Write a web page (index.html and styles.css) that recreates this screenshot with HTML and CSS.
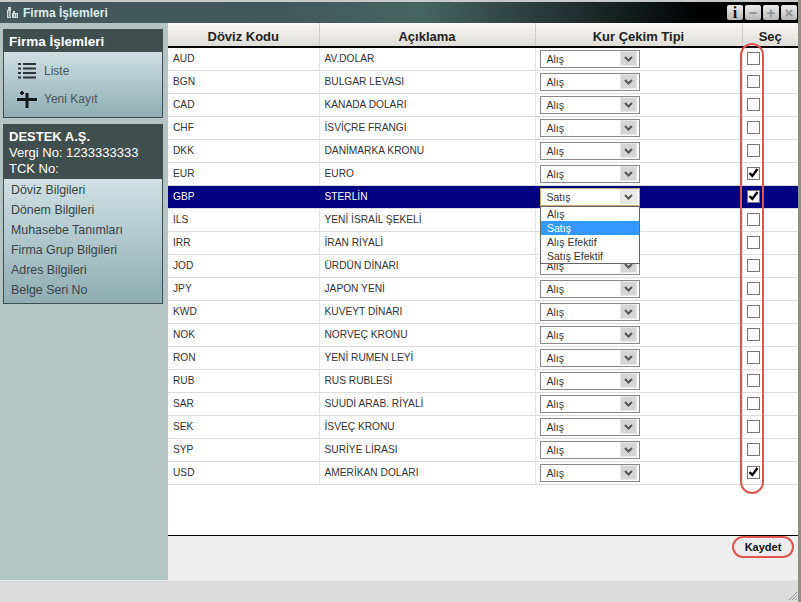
FILE: index.html
```html
<!DOCTYPE html>
<html lang="en">
<head>
  <meta charset="UTF-8">
  <meta name="viewport" content="width=device-width, initial-scale=1.0">
  <title>Firma İşlemleri</title>
  <link rel="stylesheet" href="styles.css">
</head>
<body>
  <div class="window">
    <div class="titlebar">
      <svg class="title-icon" width="12" height="12" viewBox="0 0 12 12"><path d="M0 11V3h1V0h3v11zM5 11V6h1V4h2v2h3v5z" fill="#cfdcdc"/><path d="M1.500 4v6M3 4v6M7.500 7v3M9.500 7v3" stroke="#5a6c6c" stroke-width=".7"/></svg>
      <span class="title-text">Firma İşlemleri</span>
      <div class="title-buttons">
        <span class="title-btn info">i</span>
        <span class="title-btn">&minus;</span>
        <span class="title-btn">+</span>
        <span class="title-btn">&times;</span>
      </div>
    </div>
    <div class="body">
      <div class="sidebar">
        <div class="panel">
          <div class="panel-head">Firma İşlemleri</div>
          <div class="panel-body actions">
            <div class="action">
              <svg width="20" height="18" viewBox="0 0 20 18"><path d="M1 2h3M6 2h13M1 6.500h3M6 6.500h13M1 11h3M6 11h13M1 15.500h3M6 15.500h13" stroke="#2c3636" stroke-width="2" fill="none"/></svg>
              <span>Liste</span>
            </div>
            <div class="action">
              <svg width="20" height="18" viewBox="0 0 20 18"><path d="M0 9.500h20M10 3v15" stroke="#151a1a" stroke-width="3" fill="none"/><path d="M3 3h4M5 1v4" stroke="#151a1a" stroke-width="2" fill="none"/></svg>
              <span>Yeni Kayıt</span>
            </div>
          </div>
        </div>
        <div class="panel">
          <div class="panel-head company">
            <b>DESTEK A.Ş.</b><br>Vergi No: 1233333333<br>TCK No:
          </div>
          <div class="panel-body links">
            <div>Döviz Bilgileri</div>
            <div>Dönem Bilgileri</div>
            <div>Muhasebe Tanımları</div>
            <div>Firma Grup Bilgileri</div>
            <div>Adres Bilgileri</div>
            <div>Belge Seri No</div>
          </div>
        </div>
      </div>
      <div class="main">
        <div class="table-area">
          <table class="grid">
            <colgroup><col class="c1"><col class="c2"><col class="c3"><col class="c4"></colgroup>
            <thead>
              <tr><th>Döviz Kodu</th><th>Açıklama</th><th>Kur Çekim Tipi</th><th>Seç</th></tr>
            </thead>
            <tbody id="rows"></tbody>
          </table>
          <div class="dropdown">
            <div>Alış</div>
            <div class="active">Satış</div>
            <div>Alış Efektif</div>
            <div>Satış Efektif</div>
          </div>
          <div class="ring ring-sec"></div>
        </div>
        <div class="footer">
          <button class="save">Kaydet</button>
        </div>
      </div>
    </div>
    <div class="statusbar">
      <svg class="grip" width="10" height="10" viewBox="0 0 10 10"><path d="M9 1L1 9M9 4L4 9M9 7L7 9" stroke="#8f9a9a" stroke-width="1" fill="none"/></svg>
    </div>
  </div>

  <script>
    // ILS and IRR combos sit behind the open dropdown, so they have no label
    const data = [
      ["AUD", "AV.DOLAR", "Alış", false],
      ["BGN", "BULGAR LEVASI", "Alış", false],
      ["CAD", "KANADA DOLARI", "Alış", false],
      ["CHF", "İSVİÇRE FRANGI", "Alış", false],
      ["DKK", "DANİMARKA KRONU", "Alış", false],
      ["EUR", "EURO", "Alış", true],
      ["GBP", "STERLİN", "Satış", true],
      ["ILS", "YENİ İSRAİL ŞEKELİ", "", false],
      ["IRR", "İRAN RİYALİ", "", false],
      ["JOD", "ÜRDÜN DİNARI", "Alış", false],
      ["JPY", "JAPON YENİ", "Alış", false],
      ["KWD", "KUVEYT DİNARI", "Alış", false],
      ["NOK", "NORVEÇ KRONU", "Alış", false],
      ["RON", "YENİ RUMEN LEYİ", "Alış", false],
      ["RUB", "RUS RUBLESİ", "Alış", false],
      ["SAR", "SUUDİ ARAB. RİYALİ", "Alış", false],
      ["SEK", "İSVEÇ KRONU", "Alış", false],
      ["SYP", "SURİYE LİRASI", "Alış", false],
      ["USD", "AMERİKAN DOLARI", "Alış", true]
    ];
    const arrow = '<svg width="9" height="6" viewBox="0 0 9 6"><path d="M1 1l3.500 3.500L8 1" stroke="#555" stroke-width="2" fill="none"/></svg>';
    const tick = '<svg width="11" height="10" viewBox="0 0 11 10"><path d="M1.500 5l2.800 3L9.500 1" stroke="#000" stroke-width="2.400" fill="none"/></svg>';
    const tbody = document.getElementById("rows");
    for (const d of data) {
      const row = document.createElement("tr");
      if (d[0] === "GBP") row.className = "selected";
      row.innerHTML = `
        <td class="label">${d[0]}</td>
        <td class="label">${d[1]}</td>
        <td><div class="combo"><span>${d[2]}</span><i>${arrow}</i></div></td>
        <td><div class="check">${d[3] ? tick : ""}</div></td>
      `;
      tbody.appendChild(row);
    }
  </script>
</body>
</html>
```
FILE: styles.css
```css
html, body {
  margin: 0;
  padding: 0;
}
body {
  font-family: "Liberation Sans", Arial, sans-serif;
  width: 801px;
  height: 602px;
  overflow: hidden;
  background: #c6cbca;
}
.window {
  display: flex;
  flex-direction: column;
  height: 602px;
  box-sizing: border-box;
  padding-top: 2px;
  border-right: 3px solid #8f8f88;
}
.titlebar {
  display: flex;
  align-items: center;
  height: 21px;
  flex: none;
  padding: 0 1px 0 7px;
  color: #dcecec;
  font-size: 12px;
  font-weight: bold;
  background: linear-gradient(to right, #44585a 0%, #42595a 35%, #466460 53%, #1c2a2a 74%, #000 88%);
}
.title-icon {
  margin-right: 4px;
}
.title-buttons {
  display: flex;
  gap: 2px;
  margin-left: auto;
}
.title-btn {
  display: block;
  width: 16px;
  height: 15px;
  border-radius: 2px;
  background: linear-gradient(#ededed, #b8b8b8);
  color: #8b9090;
  font-size: 15px;
  line-height: 15px;
  text-align: center;
}
.title-btn.info {
  color: #111;
  font-family: "Liberation Serif", serif;
  font-size: 16px;
}
.body {
  display: flex;
  flex: 1;
  min-height: 0;
}
.sidebar {
  width: 168px;
  flex: none;
  box-sizing: border-box;
  padding: 6px 5px 0 3px;
  background: #b3c5c2;
}
.panel {
  margin-bottom: 6px;
  border: 1px solid #3f4d4d;
  border-top: 0;
}
.panel-head {
  background: #414e4e;
  color: #fff;
  font-size: 13.5px;
  font-weight: bold;
  padding: 6px 5px 3px 5px;
  line-height: 14px;
}
.company {
  font-weight: normal;
  font-size: 13px;
  line-height: 16px;
  padding: 5px 5px 2px 5px;
}
.panel-body {
  background: linear-gradient(#cfe0e2, #8fadb4);
  color: #3a4444;
  font-size: 12px;
}
.actions {
  padding: 5px 0 4px 13px;
  color: #4a5555;
}
.action {
  display: flex;
  align-items: center;
  gap: 7px;
  height: 28px;
}
.links {
  padding: 1px 0 3px 7px;
  font-size: 12.4px;
}
.links div {
  height: 20px;
  line-height: 20px;
}
.main {
  flex: 1;
  display: flex;
  flex-direction: column;
  min-width: 0;
  background: #fff;
}
.table-area {
  position: relative;
  flex: 1;
  overflow: hidden;
}
.grid {
  width: 630px;
  border-collapse: collapse;
  table-layout: fixed;
  font-size: 10.2px;
  color: #333;
}
.c1 { width: 151px; }
.c2 { width: 216px; }
.c3 { width: 207px; }
.c4 { width: 56px; }
.grid th {
  height: 19px;
  padding: 4px 0 0;
  background: linear-gradient(#f9f8f5, #dedcd6);
  border-bottom: 2px solid #000;
  border-left: 1px solid #cfcfc9;
  color: #222;
  font-size: 13px;
  font-weight: bold;
}
.grid th:first-child {
  border-left: 0;
}
.grid td {
  box-sizing: border-box;
  height: 23px;
  padding: 0 0 0 4px;
  border-bottom: 1px solid #dcdcdc;
  border-left: 1px solid #e4e4e4;
}
.grid td:first-child {
  border-left: 0;
}
.grid td.label {
  padding: 0 0 1px 5px;
}
.selected td {
  background: #000080;
  color: #fff;
  border-left-color: #000080;
}
.combo {
  display: flex;
  align-items: center;
  justify-content: space-between;
  box-sizing: border-box;
  width: 100px;
  height: 18px;
  padding: 0 2px 0 6px;
  border: 1px solid #888;
  background: #fff;
  color: #333;
  font-size: 10.5px;
}
.combo i {
  display: flex;
  align-items: center;
  justify-content: center;
  box-sizing: border-box;
  width: 17px;
  height: 15px;
  margin-left: auto;
  border: 1px solid #e6e6e6;
  background: #d5d5d5;
}
.selected .combo {
  border-color: #c8a860;
}
.selected .combo i {
  background: #e8e8e8;
}
.check {
  display: flex;
  align-items: center;
  justify-content: center;
  box-sizing: border-box;
  width: 13px;
  height: 13px;
  margin: 0 0 1px 0;
  border: 1px solid #777;
  background: #fff;
}
.dropdown {
  position: absolute;
  left: 372px;
  top: 183px;
  box-sizing: border-box;
  width: 100px;
  height: 58px;
  border: 1px solid #666;
  background: #fff;
  color: #333;
  font-size: 10.5px;
}
.dropdown div {
  height: 14px;
  line-height: 14px;
  padding-left: 6px;
}
.dropdown .active {
  background: #3399ff;
  color: #fff;
}
.ring {
  position: absolute;
  box-sizing: border-box;
  border: 2px solid #e0564c;
  border-radius: 12px;
}
.ring-sec {
  left: 572px;
  top: 20px;
  width: 24px;
  height: 451px;
}
.footer {
  display: flex;
  justify-content: flex-end;
  align-items: flex-start;
  height: 45px;
  flex: none;
  box-sizing: border-box;
  padding: 0 4px 0 0;
  border-top: 1px solid #000;
  background: #efefef;
}
.save {
  width: 62px;
  height: 22px;
  padding: 0;
  border: 2px solid #e0564c;
  border-radius: 11px;
  background: #ececec;
  color: #111;
  font-family: "Liberation Sans", Arial, sans-serif;
  font-size: 11px;
  font-weight: bold;
}
.statusbar {
  position: relative;
  height: 22px;
  flex: none;
  box-sizing: border-box;
  border-top: 1px solid #e3e8e6;
  background: #dcdcdc;
}
.grip {
  position: absolute;
  right: 0;
  bottom: 1px;
}
```
